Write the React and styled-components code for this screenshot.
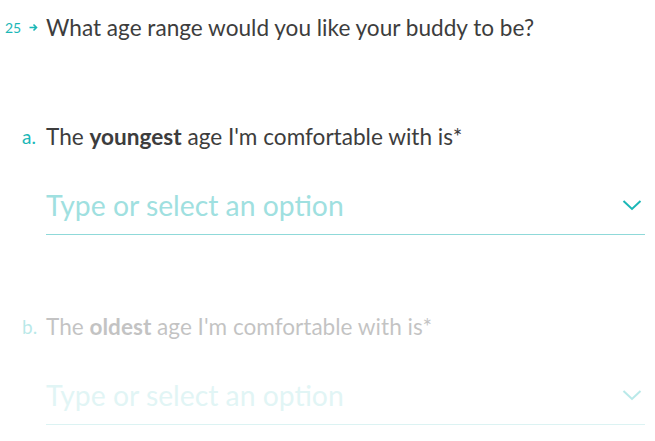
import React from "react";
import styled, { createGlobalStyle } from "styled-components";

const Global = createGlobalStyle`
  html, body { margin: 0; padding: 0; background: #fff; }
  body { font-family: Lato, "Open Sans", sans-serif; color: #3d3d3d; }
`;

const TEAL = "#1bb7b7";

const Page = styled.div`
  width: 655px;
  height: 441px;
  overflow: hidden;
  display: flex;
  flex-direction: column;
  padding: 10px 10px 0 5px;
  box-sizing: border-box;
`;

const QuestionRow = styled.div`
  display: flex;
  align-items: center;
  height: 34px;
`;

const Counter = styled.div`
  display: flex;
  align-items: center;
  width: 41px;
  color: ${TEAL};
  font-size: 14px;
  gap: 8px;
`;

const QuestionText = styled.div`
  font-size: 22.6px;
  color: #3d3d3d;
`;

const Block = styled.div`
  display: flex;
  flex-direction: column;
  margin-top: ${(p) => p.$top}px;
  opacity: ${(p) => (p.$faded ? 0.3 : 1)};
`;

const LabelRow = styled.div`
  display: flex;
  align-items: center;
  height: 30px;
`;

const Letter = styled.div`
  width: 24px;
  padding-left: 17px;
  color: ${TEAL};
  font-size: 19px;
`;

const Label = styled.div`
  font-size: 22.6px;
  color: #3d3d3d;
  b { font-weight: 700; }
`;

const Field = styled.div`
  margin: 38px 0 0 41px;
  display: flex;
  align-items: center;
  justify-content: space-between;
  height: 45px;
  border-bottom: 1px solid #8fd9d9;
`;

const Placeholder = styled.div`
  font-size: 28.3px;
  color: #9fe0e0;
  padding-bottom: 14px;
`;

const Chevron = styled.svg`
  width: 20px;
  height: 14px;
  margin-right: 3px;
  margin-bottom: 14px;
`;

const Arrow = () => (
  <svg width="9" height="9" viewBox="0 0 9 9">
    <path d="M0.5 4.5 H7.5 M4.5 1.5 L7.5 4.5 L4.5 7.5" stroke={TEAL} strokeWidth="1.6" fill="none" />
  </svg>
);

const Dropdown = () => (
  <Field>
    <Placeholder>Type or select an option</Placeholder>
    <Chevron viewBox="0 0 20 14">
      <path d="M1.5 3 L10 11 L18.5 3" stroke={TEAL} strokeWidth="2" fill="none" />
    </Chevron>
  </Field>
);

export default function App() {
  return (
    <>
      <Global />
      <Page>
        <QuestionRow>
          <Counter>
            <span>25</span>
            <Arrow />
          </Counter>
          <QuestionText>What age range would you like your buddy to be?</QuestionText>
        </QuestionRow>
        <Block $top={77}>
          <LabelRow>
            <Letter>a.</Letter>
            <Label>
              The <b>youngest</b> age I'm comfortable with is*
            </Label>
          </LabelRow>
          <Dropdown />
        </Block>
        <Block $top={76} $faded>
          <LabelRow>
            <Letter>b.</Letter>
            <Label>
              The <b>oldest</b> age I'm comfortable with is*
            </Label>
          </LabelRow>
          <Dropdown />
        </Block>
      </Page>
    </>
  );
}
